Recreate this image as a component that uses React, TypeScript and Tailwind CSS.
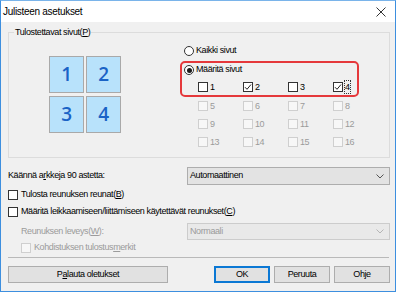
import React from 'react';

const FONT = { fontFamily: '"Liberation Sans", Arial, sans-serif' };

const Radio = ({ checked }: { checked?: boolean }) => (
  <span className="w-[10px] h-[10px] rounded-full border border-[#333] bg-white flex items-center justify-center shrink-0">
    {checked && <span className="w-[5px] h-[5px] rounded-full bg-[#1a1a1a]" />}
  </span>
);

const Check = ({ checked, disabled }: { checked?: boolean; disabled?: boolean }) => (
  <span
    className={`w-[10px] h-[10px] border flex items-center justify-center shrink-0 ${
      disabled ? 'border-[#cfcfcf] bg-[#f7f7f7]' : 'border-[#333] bg-white'
    }`}
  >
    {checked && (
      <svg width="8" height="8" viewBox="0 0 8 8">
        <path d="M1 4.2 L3 6.3 L7 1.5" fill="none" stroke="#222" strokeWidth="1" />
      </svg>
    )}
  </span>
);

const PageCheck = ({ n, checked, disabled, focus }: { n: number; checked?: boolean; disabled?: boolean; focus?: boolean }) => (
  <div className="flex items-center h-[12px]">
    <Check checked={checked} disabled={disabled} />
    <span
      className={`ml-[2px] leading-[12px] ${disabled ? 'text-[#9b9b9b]' : 'text-black'} ${
        focus ? 'outline outline-1 outline-dotted outline-[#333]' : ''
      }`}
    >
      {n}
    </span>
  </div>
);

const Tile = ({ n }: { n: number }) => (
  <div
    className="w-[35px] h-[37px] bg-[#b8e2fb] border border-[#a9a9a9] flex items-center justify-center text-[#1a63c6] text-[19px]"
    style={{ fontFamily: '"Open Sans", sans-serif', fontWeight: 600 }}
  >
    {n}
  </div>
);

const Chevron = ({ color }: { color: string }) => (
  <svg width="8" height="5" viewBox="0 0 8 5">
    <path d="M0.5 0.5 L4 4 L7.5 0.5" fill="none" stroke={color} strokeWidth="1" />
  </svg>
);

const Button = ({ children, w, primary }: { children: React.ReactNode; w: string; primary?: boolean }) => (
  <div
    className={`${w} h-[17px] bg-[#e1e1e1] flex items-center justify-center ${
      primary ? 'border-2 border-[#0b78d4]' : 'border border-[#adadad]'
    }`}
  >
    {children}
  </div>
);

export default function App() {
  return (
    <div
      className="w-[396px] h-[292px] bg-[#f0f0f0] border border-[#3d8fdf] border-t-[#7ab4ea] flex flex-col text-[9px] tracking-[-0.4px] text-black overflow-hidden"
      style={FONT}
    >
      <div className="h-[21px] bg-white flex items-center justify-between pl-[2px] pr-[9px] shrink-0">
        <span className="text-[10px] tracking-[-0.3px]">Julisteen asetukset</span>
        <svg width="10" height="10" viewBox="0 0 10 10">
          <path d="M0.5 0.5 L9.5 9.5 M9.5 0.5 L0.5 9.5" stroke="#333" strokeWidth="1" />
        </svg>
      </div>

      <div className="pl-[7px] w-[389px] flex flex-col">
        <div className="mt-[10px] h-[126px] w-[382px] border border-[#dcdcdc] relative flex">
          <span className="absolute left-[5px] top-[-7px] bg-[#f0f0f0] px-[1px] leading-[12px]">
            Tulostettavat sivut(<span className="underline">P</span>)
          </span>
          <div className="pl-[40px] pt-[23px]">
            <div className="grid grid-cols-[35px_35px] gap-x-[2px] gap-y-[3px]">
              <Tile n={1} />
              <Tile n={2} />
              <Tile n={3} />
              <Tile n={4} />
            </div>
          </div>
          <div className="ml-[59px] pt-[12px] flex flex-col">
            <div className="flex items-center h-[12px] pl-[4px]">
              <Radio />
              <span className="ml-[2px]">Kaikki sivut</span>
            </div>
            <div className="mt-[4px] w-[179px] h-[36px] border-2 border-[#e5383b] rounded-[5px] flex flex-col">
              <div className="flex items-center h-[12px] pl-[2px] mt-[1px]">
                <Radio checked />
                <span className="ml-[2px]">Määritä sivut</span>
              </div>
              <div className="mt-[5px] pl-[16px] grid grid-cols-[45px_45px_45px_45px]">
                <PageCheck n={1} />
                <PageCheck n={2} checked />
                <PageCheck n={3} />
                <PageCheck n={4} checked focus />
              </div>
            </div>
            <div className="mt-[3px] pl-[18px] grid grid-cols-[45px_45px_45px_45px] gap-y-[6px]">
              {[5, 6, 7, 8, 9, 10, 11, 12, 13, 14, 15, 16].map((n) => (
                <PageCheck key={n} n={n} disabled />
              ))}
            </div>
          </div>
        </div>

        <div className="mt-[9px] flex items-center justify-between w-[382px]">
          <span>
            Käännä a<span className="underline">r</span>kkeja 90 astetta:
          </span>
          <div className="w-[203px] h-[18px] bg-[#e3e3e3] border border-[#adadad] flex items-center justify-between pl-[2px] pr-[5px]">
            <span>Automaattinen</span>
            <Chevron color="#555" />
          </div>
        </div>

        <div className="mt-[4px] flex items-center h-[12px]">
          <Check />
          <span className="ml-[3px]">
            Tulosta reunuksen reunat(<span className="underline">B</span>)
          </span>
        </div>
        <div className="mt-[5px] flex items-center h-[12px]">
          <Check />
          <span className="ml-[3px]">
            Määritä leikkaamiseen/liittämiseen käytettävät reunukset(<span className="underline">C</span>)
          </span>
        </div>

        <div className="mt-[5px] flex items-center justify-between w-[382px]">
          <span className="pl-[13px] text-[#9b9b9b]">
            Reunuksen leveys(<span className="underline">W</span>):
          </span>
          <div className="w-[203px] h-[17px] bg-[#e9e9e9] border border-[#cccccc] flex items-center justify-between pl-[2px] pr-[5px] text-[#9b9b9b]">
            <span>Normaali</span>
            <Chevron color="#b5b5b5" />
          </div>
        </div>
        <div className="mt-[2px] flex items-center h-[12px] pl-[13px]">
          <Check disabled />
          <span className="ml-[3px] text-[#9b9b9b]">
            Kohdistuksen tulostus<span className="underline">m</span>erkit
          </span>
        </div>

        <div className="mt-[3px] h-px w-[381px] bg-[#b9b9b9]" />

        <div className="mt-[8px] flex w-[382px]">
          <Button w="w-[160px]">
            P<span className="underline">a</span>lauta oletukset
          </Button>
          <div className="ml-auto flex gap-[4px]">
            <Button w="w-[56px]" primary>
              OK
            </Button>
            <Button w="w-[56px]">Peruuta</Button>
            <Button w="w-[56px]">
              Oh<span className="underline">j</span>e
            </Button>
          </div>
        </div>
      </div>
    </div>
  );
}
